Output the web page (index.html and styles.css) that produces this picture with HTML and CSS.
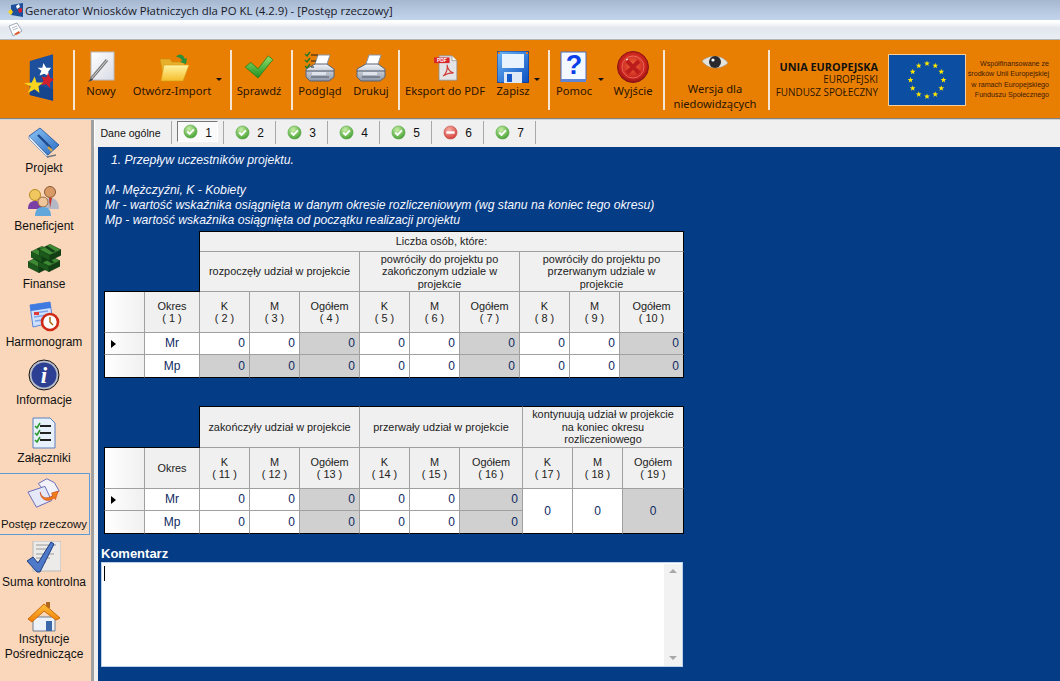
FILE: index.html
```html
<!DOCTYPE html>
<html lang="pl">
<head>
<meta charset="utf-8">
<title>Generator Wniosków Płatniczych</title>
<link rel="stylesheet" href="styles.css">
</head>
<body>
<svg class="defs" width="0" height="0" aria-hidden="true">
  <defs>
    <radialGradient id="gGreen" cx="40%" cy="30%" r="75%"><stop offset="0" stop-color="#c9efa8"/><stop offset="1" stop-color="#3f9e2c"/></radialGradient>
    <radialGradient id="gRed" cx="40%" cy="30%" r="75%"><stop offset="0" stop-color="#f7b0a8"/><stop offset="1" stop-color="#d23a34"/></radialGradient>
    <radialGradient id="gExit" cx="50%" cy="45%" r="60%"><stop offset="0" stop-color="#f06a3c"/><stop offset=".7" stop-color="#c8201c"/><stop offset="1" stop-color="#7a0f12"/></radialGradient>
    <linearGradient id="gFolder" x1="0" y1="0" x2="0" y2="1"><stop offset="0" stop-color="#fff3a0"/><stop offset="1" stop-color="#f5bd2a"/></linearGradient>
    <linearGradient id="gBlue" x1="0" y1="0" x2="1" y2="1"><stop offset="0" stop-color="#6fb6f5"/><stop offset="1" stop-color="#0a4fc0"/></linearGradient>
    <linearGradient id="gBook" x1="0" y1="0" x2="1" y2="1"><stop offset="0" stop-color="#8cc4f4"/><stop offset="1" stop-color="#2a6cc4"/></linearGradient>
    <linearGradient id="gPaper" x1="0" y1="0" x2="1" y2="1"><stop offset="0" stop-color="#ffffff"/><stop offset="1" stop-color="#d8dbe4"/></linearGradient>
    <linearGradient id="gPrinter" x1="0" y1="0" x2="0" y2="1"><stop offset="0" stop-color="#f2f4f8"/><stop offset="1" stop-color="#8d97a8"/></linearGradient>
    <linearGradient id="gRoof" x1="0" y1="0" x2="0" y2="1"><stop offset="0" stop-color="#ffc23c"/><stop offset="1" stop-color="#ee7d06"/></linearGradient>
    <linearGradient id="gCheck" x1="0" y1="0" x2="0" y2="1"><stop offset="0" stop-color="#8fe06a"/><stop offset="1" stop-color="#1f8f22"/></linearGradient>
    <symbol id="ok" viewBox="0 0 16 16"><circle cx="8" cy="8" r="7" fill="url(#gGreen)" stroke="#5aa845" stroke-width=".6"/><path d="M4.5 8l2.5 2.6L11.6 5.8" fill="none" stroke="#fff" stroke-width="2"/></symbol>
    <symbol id="no" viewBox="0 0 16 16"><circle cx="8" cy="8" r="7" fill="url(#gRed)" stroke="#c0504a" stroke-width=".6"/><rect x="3.6" y="6.7" width="8.8" height="2.6" fill="#fff"/></symbol>
    <symbol id="star" viewBox="0 0 10 10"><polygon points="5,0 6.2,3.4 9.8,3.5 7,5.7 8,9.3 5,7.2 2,9.3 3,5.7 .2,3.5 3.8,3.4" fill="#ffe600"/></symbol>
    <symbol id="printer" viewBox="0 0 32 30">
      <polygon points="14,2 26,2 22,14 10,14" fill="#fff" stroke="#8b95a5"/>
      <path d="M2 16l9-5h12l7 5v8l-5 4H6l-4-4z" fill="url(#gPrinter)" stroke="#5a6372"/>
      <path d="M2 18h28M7 24h18" stroke="#4e5666" fill="none"/>
      <rect x="8" y="19" width="14" height="3" fill="#dfe4ec"/>
    </symbol>
    <symbol id="cash" viewBox="0 0 24 18">
      <polygon points="0,6 12,0 24,6 12,12" fill="#3e8a34" stroke="#0f3a12" stroke-width=".5"/>
      <polygon points="0,6 12,12 12,18 0,12" fill="#1c5a1c" stroke="#0f3a12" stroke-width=".5"/>
      <polygon points="12,12 24,6 24,12 12,18" fill="#123f14" stroke="#0f3a12" stroke-width=".5"/>
      <polygon points="6,3 9,1.5 18,7.5 15,9" fill="#14401a"/>
    </symbol>
  </defs>
</svg>

<header class="titlebar">
  <svg class="app-icon" viewBox="0 0 16 14"><polygon points="3,2 15,0 15,14 3,12" fill="#1d4f9c"/><polygon points="0,9 3,6 5,9 3,12" fill="#f7d21c"/><polygon points="8,3 11,1 12,4 9,6" fill="#fff"/><polygon points="10,6 14,5 14,9 11,10" fill="#d8202c"/></svg>
  <span class="title-text">Generator Wniosków Płatniczych dla PO KL (4.2.9) - [Postęp rzeczowy]</span>
</header>
<div class="menubar">
  <svg class="menu-icon" viewBox="0 0 16 15"><polygon points="2,4 10,1 15,9 6,14" fill="#fff" stroke="#8a93a6" stroke-width=".8"/><path d="M5 6l5-2M6 8l5-2" stroke="#9aa5ba" stroke-width=".8"/><path d="M7 12l5-3 1 2-4 2z" fill="#e25a2a"/></svg>
</div>

<nav class="toolbar">
  <div class="logo-cell">
    <svg class="logo" viewBox="0 0 32 50"><polygon points="7,7 31,0 31,48 7,42" fill="#1d4f9c"/><polygon points="7,30 31,36 31,48 7,42" fill="#174289" opacity=".8"/><polygon points="21,9 24,14 29,14 26,18 27,23 22,20 17,22 19,17 15,14 20,14" fill="#fff"/><polygon points="26,19 28,24 32,26 28,29 28,35 24,31 19,32 21,27 19,23 24,24" fill="#d01f2e"/><polygon points="12,23 14,29 21,29 16,33 17,40 12,36 5,40 8,33 1,30 9,29" fill="#f8d51e"/></svg>
  </div>
  <div class="sep"></div>
  <div class="tool w-nowy">
    <svg class="ticon" viewBox="0 0 28 32"><rect x="4" y="1" width="23" height="28" fill="url(#gPaper)" stroke="#b8bcc6"/><path d="M20 9L4 28" stroke="#777" stroke-width="3"/><path d="M20 9L4 28" stroke="#d8d8d8" stroke-width="1"/><path d="M1 31l3-4 2 2z" fill="#444"/></svg>
    <span class="tlabel">Nowy</span>
  </div>
  <div class="tool w-open">
    <svg class="ticon" viewBox="0 0 32 32"><path d="M2 8h10l2 3h12v17H6z" fill="#e8b02a" stroke="#c98e10" stroke-width=".6"/><path d="M6 14h25l-6 16H3z" fill="url(#gFolder)" stroke="#d49a18" stroke-width=".6"/><path d="M18 6c3-4 7-3 9 2l2-1-1 6-6-2 2-1c-1-3-3-4-6-4z" fill="#2c8f3a"/></svg>
    <span class="tlabel">Otwórz-Import</span>
    <i class="caret c-open"></i>
  </div>
  <div class="sep s-a"></div>
  <div class="tool w-check">
    <svg class="ticon check" viewBox="0 0 32 26"><path d="M1 13l6-5 8 7L26 1l5 4-16 20z" fill="url(#gCheck)" stroke="#1f7a1c" stroke-width=".8"/></svg>
    <span class="tlabel">Sprawdź</span>
  </div>
  <div class="sep s-b"></div>
  <div class="tool w-prev">
    <svg class="ticon" viewBox="0 0 32 32"><use href="#printer" y="2" width="32" height="30"/><path d="M1 3l2 2 3-4M1 9l2 2 3-4M1 15l2 2 3-4" fill="none" stroke="#1c7a2a" stroke-width="1.4"/><path d="M7 4h7M7 10h5M7 16h3" stroke="#222" stroke-width="1"/></svg>
    <span class="tlabel">Podgląd</span>
  </div>
  <div class="tool w-print">
    <svg class="ticon" viewBox="0 0 32 32"><use href="#printer" y="2" width="32" height="30"/></svg>
    <span class="tlabel">Drukuj</span>
  </div>
  <div class="sep s-c"></div>
  <div class="tool w-pdf">
    <svg class="ticon pdf" viewBox="0 0 30 32"><path d="M7 1h16l6 6v24H7z" fill="#e4e4e6" stroke="#8f8f93"/><path d="M23 1v6h6" fill="#fff" stroke="#8f8f93"/><rect x="1" y="3" width="19" height="7" fill="#d8262c"/><text class="pdf-text" x="10.5" y="9">PDF</text><path d="M12 26c4-3 6-9 5-14 0 5 4 9 8 10-5 0-9 1-13 4z" fill="none" stroke="#d03a34" stroke-width="1.4"/></svg>
    <span class="tlabel">Eksport do PDF</span>
  </div>
  <div class="tool w-save">
    <svg class="ticon" viewBox="0 0 32 32"><rect x="0" y="0" width="32" height="32" rx="2" fill="url(#gBlue)" stroke="#0a2f88"/><rect x="5" y="3" width="22" height="14" fill="#e8f3fd"/><rect x="7" y="21" width="18" height="11" fill="#dfe9f6"/><rect x="10" y="23" width="5" height="8" fill="#1659c8"/><rect x="1" y="1" width="2" height="2" fill="#ed7a1a"/><rect x="29" y="1" width="2" height="2" fill="#ed7a1a"/></svg>
    <span class="tlabel">Zapisz</span>
    <i class="caret c-save"></i>
  </div>
  <div class="sep s-d"></div>
  <div class="tool w-help">
    <svg class="ticon" viewBox="0 0 28 32"><path d="M1 1h25v28H3l-2 2z" fill="#f4f8ff" stroke="#4a6fc4"/><rect x="1" y="28" width="25" height="3" fill="#5f86d6"/><text class="help-text" x="14" y="23">?</text></svg>
    <span class="tlabel">Pomoc</span>
    <i class="caret c-help"></i>
  </div>
  <div class="tool w-exit">
    <svg class="ticon" viewBox="0 0 32 32"><circle cx="16" cy="16" r="15.5" fill="url(#gExit)" stroke="#8a1416"/><circle cx="16" cy="16" r="11" fill="none" stroke="#e8675a" stroke-width="1"/><path d="M10 10l12 12M22 10L10 22" stroke="#bb1d1c" stroke-width="4"/><path d="M9 9l2-1" stroke="#fff" stroke-width="1"/></svg>
    <span class="tlabel">Wyjście</span>
  </div>
  <div class="sep s-e"></div>
  <div class="tool w-eye">
    <svg class="eye" viewBox="0 0 28 16"><path d="M1 6C7 0 21-1 27 8 20 15 7 15 1 6z" fill="#e4e2dc" stroke="#9a8f80" stroke-width=".6"/><circle cx="14" cy="7" r="6" fill="#2a2a2e"/><circle cx="12" cy="5" r="1.6" fill="#fff"/></svg>
    <span class="tlabel two">Wersja dla<br>niedowidzących</span>
  </div>
  <div class="sep s-f"></div>
  <div class="ue-text">
    <strong>UNIA EUROPEJSKA</strong>
    <span>EUROPEJSKI</span>
    <span>FUNDUSZ SPOŁECZNY</span>
  </div>
  <svg class="flag" viewBox="0 0 78 52">
    <rect x=".5" y=".5" width="77" height="51" fill="#0b4ea2" stroke="#f9cf96"/>
    <use href="#star" x="36" y="6.5" width="6" height="6"/><use href="#star" x="44.25" y="8.7" width="6" height="6"/><use href="#star" x="50.3" y="14.75" width="6" height="6"/><use href="#star" x="52.5" y="23" width="6" height="6"/><use href="#star" x="50.3" y="31.25" width="6" height="6"/><use href="#star" x="44.25" y="37.3" width="6" height="6"/><use href="#star" x="36" y="39.5" width="6" height="6"/><use href="#star" x="27.75" y="37.3" width="6" height="6"/><use href="#star" x="21.7" y="31.25" width="6" height="6"/><use href="#star" x="19.5" y="23" width="6" height="6"/><use href="#star" x="21.7" y="14.75" width="6" height="6"/><use href="#star" x="27.75" y="8.7" width="6" height="6"/>
  </svg>
  <div class="cofin">Współfinansowane ze<br>środków Unii Europejskiej<br>w ramach Europejskiego<br>Funduszu Społecznego</div>
</nav>

<div class="main">
  <aside class="side">
    <div class="nav-item">
      <svg class="nicon" viewBox="0 0 34 32"><path d="M2 9L13 1l19 17-11 10z" fill="url(#gBook)" stroke="#1d4f9c" stroke-width=".8"/><path d="M2 9l18 19 1 3L2 12z" fill="#eef4fb" stroke="#6f8fc0" stroke-width=".8"/><path d="M11 8l13 13" stroke="#204a8c" stroke-width="2.4"/><path d="M21 20l4 4" stroke="#d8a23c" stroke-width="2.4"/><path d="M20 30l9-2" stroke="#777" stroke-width="1.6"/></svg>
      <span>Projekt</span>
    </div>
    <div class="nav-item">
      <svg class="nicon" viewBox="0 0 34 32"><circle cx="23" cy="7" r="5.5" fill="#d99a66" stroke="#8a5a34"/><path d="M15 24c0-8 3-11 8-11s9 3 9 11z" fill="#b5b9c6"/><path d="M22 13l1 10 2-10z" fill="#c8342c"/><circle cx="8" cy="10" r="5.5" fill="#f0c860" stroke="#b78a20"/><path d="M1 24c0-6 3-8 7-8s7 2 7 8z" fill="#7a3fa6"/><circle cx="16" cy="17" r="5" fill="#efc69c" stroke="#9a6a3c"/><path d="M8 31c0-6 3-9 8-9s8 3 8 9z" fill="#62a7dc"/></svg>
      <span>Beneficjent</span>
    </div>
    <div class="nav-item">
      <svg class="nicon" viewBox="0 0 34 32"><use href="#cash" x="1" y="13" width="22" height="17"/><use href="#cash" x="11" y="12" width="22" height="17"/><use href="#cash" x="4" y="3" width="22" height="17"/><use href="#cash" x="12" y="1" width="22" height="17"/></svg>
      <span>Finanse</span>
    </div>
    <div class="nav-item">
      <svg class="nicon" viewBox="0 0 34 32"><path d="M3 4l20-3 3 20-20 5z" fill="#cfe0fa" stroke="#5a86dc"/><path d="M3 4l20-3 1 6-20 3z" fill="#3f7ae0"/><path d="M7 12l14-2M7 16l14-2M8 20l8-1" stroke="#7da4ea" stroke-width="1.4"/><rect x="7" y="11" width="5" height="3" fill="#e23a3a"/><circle cx="23" cy="21" r="8" fill="#fff" stroke="#cf2a14" stroke-width="2.6"/><path d="M23 16v5l3 3" fill="none" stroke="#a86a10" stroke-width="1.5"/></svg>
      <span>Harmonogram</span>
    </div>
    <div class="nav-item">
      <svg class="nicon" viewBox="0 0 34 32"><circle cx="17" cy="16" r="15" fill="#b8bcc8" stroke="#111" stroke-width="1"/><circle cx="17" cy="16" r="12.5" fill="#2c3f92"/><text class="info-text" x="17" y="24">i</text></svg>
      <span>Informacje</span>
    </div>
    <div class="nav-item">
      <svg class="nicon" viewBox="0 0 34 32"><path d="M6 1h17l5 5v25H6z" fill="#e8f0fb" stroke="#5a80c0"/><path d="M13 9h11M13 16h11M13 23h11" stroke="#222" stroke-width="2"/><path d="M8 9l2 2 3-5M8 16l2 2 3-5M8 23l2 2 3-5" fill="none" stroke="#2a9a2a" stroke-width="1.6"/></svg>
      <span>Załączniki</span>
    </div>
    <div class="nav-item active">
      <svg class="nicon" viewBox="0 0 38 32"><path d="M13 6l9-5 8 4 5 9-10 7z" fill="#f2f3fa" stroke="#6268b8"/><path d="M2 15l18-6 7 15-16 7z" fill="#e4e8f8" stroke="#6268b8"/><path d="M15 15c1 6 7 8 13 4l-1-3 7-2-3 9-1-2c-7 6-15 2-15-6z" fill="#ee7d1a" stroke="#cc3a14" stroke-width=".6"/></svg>
      <span>Postęp rzeczowy</span>
    </div>
    <div class="nav-item">
      <svg class="nicon" viewBox="0 0 34 32"><rect x="6" y="0" width="28" height="30" fill="#ecebea" stroke="#b8b8b8"/><path d="M9 4h20M9 8h14M9 13h18M9 17h14M9 21h10" stroke="#9a9a9a" stroke-width="1"/><path d="M0 20l6-4 5 6L24 1l3 2-14 28h-3z" fill="#4d79c8" stroke="#1e3e80"/></svg>
      <span>Suma kontrolna</span>
    </div>
    <div class="nav-item double">
      <svg class="nicon" viewBox="0 0 34 30"><rect x="19" y="0" width="4" height="6" fill="#b06a20"/><path d="M6 15h22v14H6z" fill="#edf2f8" stroke="#6c7c90"/><rect x="19" y="19" width="6" height="10" fill="#3a68a8"/><path d="M1 17L17 2l16 14-4 2-12-9L5 20z" fill="url(#gRoof)" stroke="#d06a08"/></svg>
      <span>Instytucje<br>Pośredniczące</span>
    </div>
  </aside>

  <div class="content">
    <div class="tabs">
      <div class="tab t-first">Dane ogólne</div>
      <div class="tab t-cur"><span class="sunken"><svg class="tab-i" viewBox="0 0 16 16"><use href="#ok"/></svg><b>1</b></span></div>
      <div class="tab"><svg class="tab-i" viewBox="0 0 16 16"><use href="#ok"/></svg><b>2</b></div>
      <div class="tab"><svg class="tab-i" viewBox="0 0 16 16"><use href="#ok"/></svg><b>3</b></div>
      <div class="tab"><svg class="tab-i" viewBox="0 0 16 16"><use href="#ok"/></svg><b>4</b></div>
      <div class="tab"><svg class="tab-i" viewBox="0 0 16 16"><use href="#ok"/></svg><b>5</b></div>
      <div class="tab"><svg class="tab-i" viewBox="0 0 16 16"><use href="#no"/></svg><b>6</b></div>
      <div class="tab"><svg class="tab-i" viewBox="0 0 16 16"><use href="#ok"/></svg><b>7</b></div>
    </div>

    <section class="panel">
      <p class="line indent">1. Przepływ uczestników projektu.</p>
      <p class="line">&nbsp;</p>
      <p class="line">M- Mężczyźni, K - Kobiety</p>
      <p class="line">Mr - wartość wskaźnika osiągnięta w danym okresie rozliczeniowym (wg stanu na koniec tego okresu)</p>
      <p class="line">Mp - wartość wskaźnika osiągnięta od początku realizacji projektu</p>

      <div class="grid g1">
        <div class="blank"></div>
        <div class="c h top edge span9">Liczba osób, które:</div>
        <div class="c h span3">rozpoczęły udział w projekcie</div>
        <div class="c h span3">powróciły do projektu po<br>zakończonym udziale w<br>projekcie</div>
        <div class="c h span3 edge">powróciły do projektu po<br>przerwanym udziale w<br>projekcie</div>
        <div class="c h sel"></div>
        <div class="c h">Okres<br>( 1 )</div>
        <div class="c h">K<br>( 2 )</div><div class="c h">M<br>( 3 )</div><div class="c h">Ogółem<br>( 4 )</div>
        <div class="c h">K<br>( 5 )</div><div class="c h">M<br>( 6 )</div><div class="c h">Ogółem<br>( 7 )</div>
        <div class="c h">K<br>( 8 )</div><div class="c h">M<br>( 9 )</div><div class="c h edge">Ogółem<br>( 10 )</div>

        <div class="c sel"><i class="arrow"></i></div>
        <div class="c lbl">Mr</div>
        <div class="c n">0</div><div class="c n">0</div><div class="c n g">0</div>
        <div class="c n">0</div><div class="c n">0</div><div class="c n g">0</div>
        <div class="c n">0</div><div class="c n">0</div><div class="c n g edge">0</div>

        <div class="c sel low"></div>
        <div class="c lbl low">Mp</div>
        <div class="c n g low">0</div><div class="c n g low">0</div><div class="c n g low">0</div>
        <div class="c n low">0</div><div class="c n low">0</div><div class="c n g low">0</div>
        <div class="c n low">0</div><div class="c n low">0</div><div class="c n g edge low">0</div>
      </div>

      <div class="grid g2">
        <div class="blank b2"></div>
        <div class="c h top span3">zakończyły udział w projekcie</div>
        <div class="c h top span3">przerwały udział w projekcie</div>
        <div class="c h top span3 edge">kontynuują udział w projekcie<br>na koniec okresu<br>rozliczeniowego</div>
        <div class="c h sel"></div>
        <div class="c h">Okres</div>
        <div class="c h">K<br>( 11 )</div><div class="c h">M<br>( 12 )</div><div class="c h">Ogółem<br>( 13 )</div>
        <div class="c h">K<br>( 14 )</div><div class="c h">M<br>( 15 )</div><div class="c h">Ogółem<br>( 16 )</div>
        <div class="c h">K<br>( 17 )</div><div class="c h">M<br>( 18 )</div><div class="c h edge">Ogółem<br>( 19 )</div>

        <div class="c sel"><i class="arrow"></i></div>
        <div class="c lbl">Mr</div>
        <div class="c n">0</div><div class="c n">0</div><div class="c n g">0</div>
        <div class="c n">0</div><div class="c n">0</div><div class="c n g">0</div>
        <div class="c mid tall low">0</div><div class="c mid tall low">0</div><div class="c mid g tall low edge">0</div>

        <div class="c sel low"></div>
        <div class="c lbl low">Mp</div>
        <div class="c n low">0</div><div class="c n low">0</div><div class="c n g low">0</div>
        <div class="c n low">0</div><div class="c n low">0</div><div class="c n g low">0</div>
      </div>

      <h2 class="kom">Komentarz</h2>
      <div class="memo">
        <i class="cursor"></i>
        <div class="scroll"><i class="up"></i><i class="down"></i></div>
      </div>
    </section>
  </div>
</div>
</body>
</html>
```

FILE: styles.css
```css
* { box-sizing: border-box; }
html, body { margin: 0; padding: 0; }
body {
  width: 1060px;
  height: 681px;
  overflow: hidden;
  display: flex;
  flex-direction: column;
  background: #f0f0f0;
  font-family: "Liberation Sans", Arial, sans-serif;
  color: #000;
}
.defs { position: absolute; }

.titlebar {
  height: 20px;
  flex: none;
  display: flex;
  align-items: center;
  padding-left: 8px;
  background: linear-gradient(#a6b8d0, #c3d5ec);
}
.app-icon { width: 16px; height: 14px; margin-right: 1px; }
.title-text { font-family: "Open Sans", sans-serif; font-size: 11.4px; color: #1a1a2a; white-space: nowrap; }

.menubar {
  height: 20px;
  flex: none;
  padding: 2px 0 0 7px;
  background: linear-gradient(#ffffff 0, #ffffff 2px, #e2e7ef 8px, #e9edf4 100%);
  border-bottom: 1px solid #b4b4b4;
}
.menu-icon { display: block; width: 16px; height: 15px; }

.toolbar {
  height: 79px;
  flex: none;
  display: flex;
  align-items: flex-start;
  background: #e97f02;
  border-bottom: 1px solid #808080;
}
.logo-cell { width: 73px; height: 77px; flex: none; padding: 14px 0 0 23px; }
.logo { display: block; width: 31px; height: 49px; }
.sep { width: 2px; height: 60px; margin-top: 10px; flex: none; background: #f6e6d4; }
.s-a { margin-left: 3px; }
.s-b { margin-left: 5px; }
.s-c { margin-left: 3px; }
.s-d { margin-left: 12px; }
.s-f { margin-left: 3px; }

.tool {
  position: relative;
  flex: none;
  height: 77px;
  padding-top: 11px;
  display: flex;
  flex-direction: column;
  align-items: center;
}
.ticon { display: block; width: 32px; height: 32px; flex: none; }
.ticon.check { width: 30px; height: 24px; margin-top: 4px; }
.ticon.pdf { width: 25px; height: 26px; margin-top: 4px; }
.tlabel {
  position: absolute;
  left: 0;
  right: 0;
  top: 43px;
  text-align: center;
  font-family: "Noto Sans", sans-serif;
  font-size: 11.2px;
  line-height: 16px;
  color: #2a1400;
  white-space: nowrap;
}
.tlabel.two { top: 41px; line-height: 15px; }
.w-nowy { width: 52px; }
.w-open { width: 100px; }
.w-open .ticon { margin-right: 6px; }
.w-open .tlabel { right: 10px; }
.w-check { width: 54px; }
.w-prev { width: 54px; }
.w-print { width: 48px; }
.w-pdf { width: 90px; }
.w-save { width: 46px; }
.w-help { width: 48px; }
.w-exit { width: 60px; margin-left: 5px; }
.w-eye { width: 100px; padding-top: 15px; }
.eye { display: block; width: 28px; height: 16px; }
.caret {
  position: absolute;
  top: 38px;
  border: 3px solid transparent;
  border-top: 3px solid #111;
  border-bottom: 0;
}
.c-open { right: 5px; }
.c-save { right: -4px; }
.c-help { right: -6px; }
.pdf-text { font: bold 6px "Liberation Sans", sans-serif; fill: #fff; text-anchor: middle; }
.help-text { font: bold 27px "Liberation Sans", sans-serif; fill: #0a3ee8; text-anchor: middle; }
.info-text { font: italic bold 23px "Liberation Serif", serif; fill: #fff; text-anchor: middle; }

.ue-text {
  flex: none;
  width: 108px;
  margin-top: 20px;
  display: flex;
  flex-direction: column;
  align-items: flex-end;
  font-family: "Open Sans", sans-serif;
  font-size: 9.9px;
  line-height: 13px;
  color: #2a1500;
  white-space: nowrap;
}
.ue-text strong { font-weight: 700; color: #111; font-size: 10.9px; }
.flag { flex: none; display: block; width: 78px; height: 52px; margin: 14px 0 0 10px; }
.cofin {
  flex: none;
  width: 83px;
  margin: 19px 0 0 0;
  text-align: right;
  font-family: "Liberation Sans", sans-serif;
  font-size: 7.1px;
  line-height: 10.3px;
  color: #3c1a04;
  white-space: nowrap;
}

.main { flex: 1; display: flex; min-height: 0; border-top: 1px solid #d4d4d4; }
.side {
  width: 94px;
  flex: none;
  padding-top: 1px;
  background: #fad7bb;
  border-right: 3px solid #a0a0a0;
  display: flex;
  flex-direction: column;
}
.nav-item {
  height: 58px;
  flex: none;
  display: flex;
  flex-direction: column;
  align-items: center;
  font-family: "Liberation Sans", sans-serif;
  font-size: 12px;
  line-height: 15px;
  text-align: center;
  white-space: nowrap;
  color: #111;
  padding: 6px 3px 0 0;
}
.nicon { display: block; width: 34px; height: 32px; margin-bottom: 2px; flex: none; }
.nav-item.active {
  height: 62px;
  margin: 4px 1px 0 0;
  border: 1px solid #5a9bd8;
  border-left: 0;
  padding: 3px 1px 0 0;
  font-size: 11.4px;
}
.nav-item.active .nicon { width: 36px; margin-bottom: 8px; }
.double { padding-top: 9px; }
.double .nicon { height: 30px; margin-bottom: 0; }

.content { flex: 1; min-width: 0; display: flex; flex-direction: column; }
.tabs {
  height: 27px;
  flex: none;
  display: flex;
  align-items: flex-start;
  background: #f0f0f0;
  border-left: 1px solid #fff;
}
.tab {
  width: 52px;
  height: 23px;
  flex: none;
  display: flex;
  align-items: center;
  justify-content: center;
  gap: 7px;
  margin-top: 1px;
  border-right: 1px solid #a8a8a8;
  font-size: 11px;
  color: #111;
}
.tab b { font-weight: normal; font-size: 12px; }
.t-first { width: 77px; padding-right: 5px; font-size: 10.6px; }
.tab-i { width: 15px; height: 15px; display: block; }
.t-cur { padding: 0 5px; align-items: flex-start; }
.sunken {
  flex: 1;
  height: 21px;
  display: flex;
  align-items: center;
  justify-content: center;
  gap: 7px;
  border: 1px solid #fff;
  border-top-color: #777;
  border-left-color: #777;
  background: #fafafa;
}
.sunken b { padding-top: 3px; }

.panel {
  flex: 1;
  min-height: 0;
  margin-left: 4px;
  padding: 6px 0 0 7px;
  background: #053c86;
  color: #fff;
}
.line {
  margin: 0;
  height: 15px;
  font-style: italic;
  font-size: 12.2px;
  line-height: 15px;
  white-space: nowrap;
  color: #f6f8ff;
}
.indent { padding-left: 6px; }

.grid {
  display: grid;
  width: 580px;
  margin-left: -1px;
  color: #222;
  font-family: "Liberation Sans", sans-serif;
  font-size: 10.9px;
  line-height: 12.5px;
}
.g1 {
  margin-top: 3px;
  grid-template-columns: 41px 55px 50px 50px 60px 50px 50px 60px 50px 50px 64px;
  grid-template-rows: 21px 40px 41px 22px 23px;
}
.g2 {
  margin-top: 28px;
  grid-template-columns: 41px 55px 50px 50px 60px 50px 50px 63px 50px 50px 61px;
  grid-template-rows: 42px 41px 22px 23px;
}
.blank {
  grid-column: 1 / span 2;
  grid-row: 1 / span 2;
  border-right: 1px solid #000;
  border-bottom: 1px solid #000;
}
.b2 { grid-row: 1; }
.c {
  display: flex;
  align-items: center;
  justify-content: center;
  text-align: center;
  background: #fff;
  border-right: 1px solid #a0a0a0;
  border-bottom: 1px solid #a0a0a0;
}
.h { background: #f0f0f0; padding: 0 1px; }
.top { border-top: 1px solid #000; }
.edge { border-right: 1px solid #000; }
.low { border-bottom: 1px solid #000; }
.span9 { grid-column: span 9; }
.span3 { grid-column: span 3; }
.sel {
  background: linear-gradient(90deg, #fff, #f0f0f0);
  border-left: 1px solid #000;
  justify-content: flex-start;
  padding-left: 6px;
}
.lbl, .n, .mid { color: #0e2a62; font-size: 12px; }
.n { justify-content: flex-end; padding-right: 4px; }
.g { background: #d0d0d0; }
.tall { grid-row: span 2; }
.arrow {
  display: block;
  border: 4px solid transparent;
  border-left: 5px solid #000;
  border-right: 0;
}

.kom {
  margin: 11px 0 0 -4px;
  font-size: 13px;
  font-weight: bold;
  line-height: 17px;
  color: #fff;
}
.memo {
  position: relative;
  width: 582px;
  height: 105px;
  margin-left: -4px;
  background: #fff;
  border: 1px solid #bcd2ea;
}
.cursor {
  position: absolute;
  left: 2px;
  top: 3px;
  width: 1px;
  height: 15px;
  background: #000;
}
.scroll {
  position: absolute;
  right: 0;
  top: 1px;
  bottom: 0;
  width: 18px;
  background: #f2f2f2;
}
.up, .down {
  position: absolute;
  left: 5px;
  border: 4px solid transparent;
}
.up { top: 5px; border-top: 0; border-bottom: 4px solid #a8a8a8; }
.down { bottom: 6px; border-bottom: 0; border-top: 4px solid #a8a8a8; }
```
